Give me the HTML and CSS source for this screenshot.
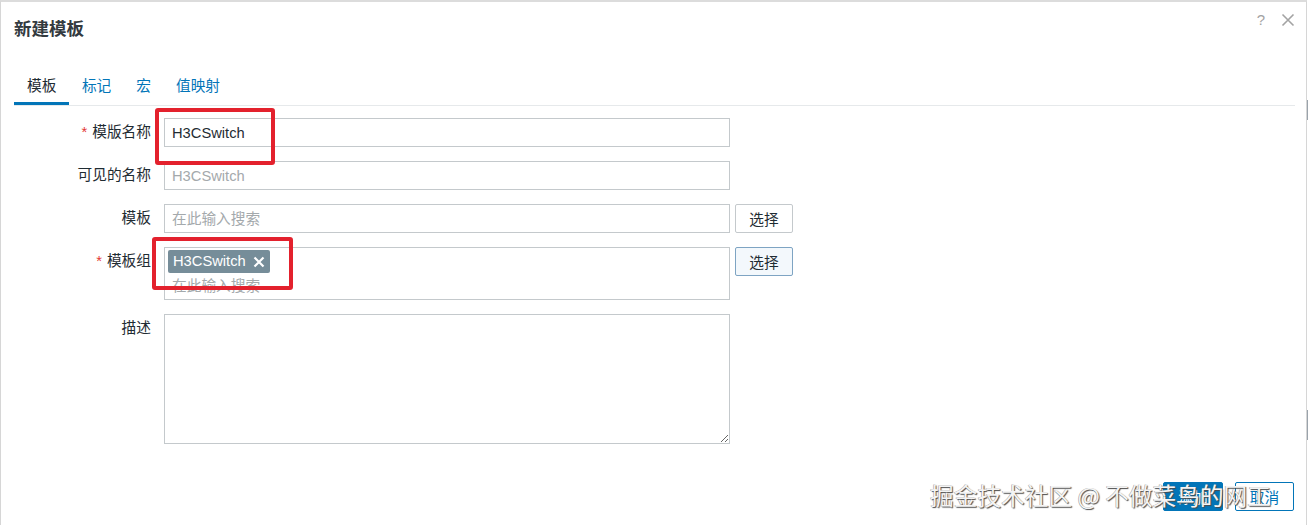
FILE: index.html
```html
<!DOCTYPE html>
<html lang="zh">
<head>
<meta charset="utf-8">
<title>新建模板</title>
<link rel="stylesheet" href="styles.css">
</head>
<body>
<div class="dialog">
  <div class="header">
    <h1 class="title">新建模板</h1>
    <div class="header-tools">
      <span class="help">?</span>
      <svg class="close" width="14" height="14" viewBox="0 0 14 14"><path d="M1.5 1.5L12.5 12.5M12.5 1.5L1.5 12.5" stroke="#a3a3a3" stroke-width="1.6" fill="none"/></svg>
    </div>
  </div>
  <ul class="tabs">
    <li class="tab active">模板</li>
    <li class="tab">标记</li>
    <li class="tab">宏</li>
    <li class="tab">值映射</li>
  </ul>
  <div class="form">
    <label class="label"><span class="req">*</span>模版名称</label>
    <div class="control"><input class="input" type="text" value="H3CSwitch"></div>

    <label class="label">可见的名称</label>
    <div class="control"><input class="input" type="text" placeholder="H3CSwitch"></div>

    <label class="label">模板</label>
    <div class="control"><input class="input" type="text" placeholder="在此输入搜索"><button class="btn-alt">选择</button></div>

    <label class="label"><span class="req">*</span>模板组</label>
    <div class="control">
      <div class="multi">
        <span class="chip">H3CSwitch<svg class="chip-x" width="12" height="12" viewBox="0 0 12 12"><path d="M1.5 1.5L10.5 10.5M10.5 1.5L1.5 10.5" stroke="#fff" stroke-width="2.2" fill="none"/></svg></span>
        <span class="multi-ph">在此输入搜索</span>
      </div>
      <button class="btn-alt focus">选择</button>
    </div>

    <label class="label">描述</label>
    <div class="control"><textarea class="textarea"></textarea></div>
  </div>
  <div class="footer">
    <button class="btn-primary">添加</button>
    <button class="btn-outline">取消</button>
  </div>
  <div class="mark mark-1"></div>
  <div class="mark mark-2"></div>
  <div class="watermark">掘金技术社区 @ 不做菜鸟的网工</div>
  <div class="scroll"><span class="thumb t1"></span><span class="thumb t2"></span></div>
</div>
</body>
</html>
```

FILE: styles.css
```css
* { box-sizing: border-box; }
html, body { margin: 0; padding: 0; background: #fff; }
body {
  font-family: "Liberation Sans", Arial, "Noto Sans CJK SC", sans-serif;
  font-size: 14.7px;
  color: #1f2c33;
  width: 1308px;
  height: 525px;
  overflow: hidden;
}
.dialog {
  position: relative;
  width: 1307px;
  height: 527px;
  border: 1px solid #d6d6d6;
  border-top: 2px solid #dcdcdc;
  background: #fff;
}
.header {
  display: flex;
  justify-content: space-between;
  align-items: flex-start;
  padding: 15px 13px 0 13px;
}
.title {
  margin: 0;
  font-size: 17.5px;
  line-height: 24px;
  font-weight: bold;
  color: #333a3f;
}
.header-tools {
  display: flex;
  align-items: center;
  gap: 16px;
  margin-top: -6px;
  margin-right: -2px;
}
.help {
  color: #a3a3a3;
  font-size: 15px;
  line-height: 18px;
}
.close { display: block; }
.tabs {
  list-style: none;
  display: flex;
  margin: 27px 11px 0 13px;
  padding: 0;
  border-bottom: 1px solid #e6e9eb;
}
.tab {
  padding: 7px 12.5px 5px;
  line-height: 22px;
  color: #0275b8;
  border-bottom: 3px solid transparent;
}
.tab.active {
  color: #1f2c33;
  border-bottom-color: #0275b8;
  padding-left: 13px;
  padding-right: 13px;
}
.form {
  display: grid;
  grid-template-columns: 137px 1fr;
  column-gap: 13px;
  row-gap: 14px;
  padding: 12px 13px 0 13px;
}
.label {
  text-align: right;
  line-height: 29px;
  white-space: nowrap;
}
.req {
  color: #e33734;
  margin-right: 5px;
}
.control {
  display: flex;
  align-items: flex-start;
  gap: 5px;
}
.input {
  width: 566px;
  height: 29px;
  border: 1px solid #c4c9cc;
  border-radius: 0;
  padding: 0 7px;
  font: inherit;
  color: #1f2c33;
  outline: none;
  background: #fff;
}
.input::placeholder { color: #a4a9ac; }
.btn-alt {
  width: 58px;
  height: 29px;
  border: 1px solid #c4c9cc;
  border-radius: 2px;
  background: #fff;
  font: inherit;
  color: #1f2c33;
  padding: 0;
}
.btn-alt.focus {
  border-color: #7ea4c3;
  background: #f3f8fc;
}
.multi {
  width: 566px;
  height: 53px;
  border: 1px solid #c4c9cc;
  padding: 2px 3px 0 3px;
  display: flex;
  flex-direction: column;
  align-items: flex-start;
}
.chip {
  display: inline-flex;
  align-items: center;
  gap: 7px;
  height: 23px;
  padding: 0 5px 0 5px;
  background: #768d99;
  color: #fff;
  border-radius: 2px;
  line-height: 23px;
}
.chip-x { display: block; }
.multi-ph {
  margin-top: 2px;
  padding-left: 4px;
  line-height: 22px;
  color: #a4a9ac;
}
.textarea {
  width: 566px;
  height: 130px;
  border: 1px solid #c4c9cc;
  border-radius: 0;
  font: inherit;
  resize: both;
  outline: none;
  display: block;
}
.footer {
  display: flex;
  justify-content: flex-end;
  gap: 12px;
  padding: 38px 12px 0 0;
}
.btn-primary, .btn-outline {
  height: 29px;
  border-radius: 2px;
  font: inherit;
  padding: 0;
}
.btn-primary {
  width: 60px;
  background: #0275b8;
  border: 1px solid #0275b8;
  color: #fff;
}
.btn-outline {
  width: 59px;
  background: #fff;
  border: 1px solid #0275b8;
  color: #0275b8;
}
.mark {
  position: absolute;
  border: 4px solid #e3212d;
  border-radius: 3px;
  pointer-events: none;
}
.mark-1 { left: 154px; top: 106px; width: 120px; height: 57px; }
.mark-2 { left: 151px; top: 235px; width: 141px; height: 53px; }
.watermark {
  position: absolute;
  left: 929px;
  top: 477px;
  font-family: "Noto Sans CJK SC", sans-serif;
  font-size: 23.7px;
  line-height: 32px;
  color: #f4f4f4;
  text-shadow: 1px 1px 1px #4a4a4a, -0.5px -0.5px 0 #9a9a9a;
  white-space: nowrap;
  pointer-events: none;
}
.scroll {
  position: absolute;
  right: -3px;
  top: 0;
  width: 2px;
  height: 100%;
}
.thumb {
  position: absolute;
  left: 0;
  width: 2px;
  background: #9aa3ab;
}
.t1 { top: 98px; height: 20px; }
.t2 { top: 408px; height: 30px; }
```
